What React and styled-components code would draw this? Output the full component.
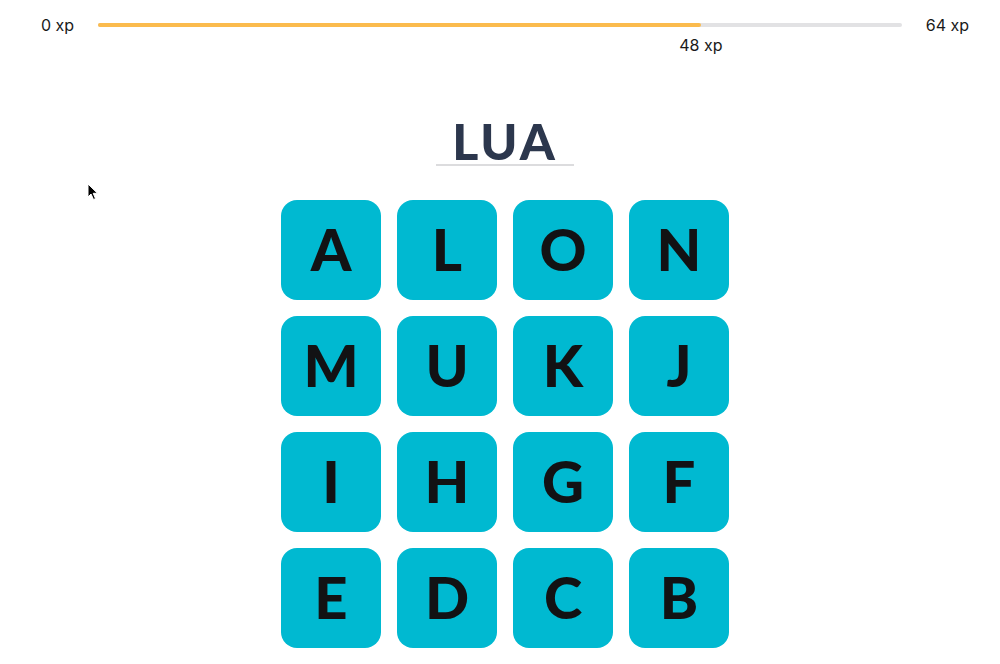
import React from 'react';
import styled, { createGlobalStyle } from 'styled-components';

const GlobalStyle = createGlobalStyle`
  body {
    margin: 0;
    background: #fff;
    font-family: Inter, "Liberation Sans", sans-serif;
  }
`;

const LETTERS = ['A', 'L', 'O', 'N', 'M', 'U', 'K', 'J', 'I', 'H', 'G', 'F', 'E', 'D', 'C', 'B'];

export default function App() {
  const xp = 48;
  const max = 64;
  const pct = (xp / max) * 100;

  return (
    <Page>
      <GlobalStyle />
      <ProgressRow>
        <XpLabel>0 xp</XpLabel>
        <Track>
          <Fill style={{ width: `${pct}%` }} />
          <Marker style={{ left: `${pct}%` }}>{xp} xp</Marker>
        </Track>
        <XpLabel>{max} xp</XpLabel>
      </ProgressRow>

      <Main>
        <Word>LUA</Word>
        <Grid>
          {LETTERS.map((l) => (
            <Tile key={l}>{l}</Tile>
          ))}
        </Grid>
      </Main>

      <Cursor width="12" height="18" viewBox="0 0 12 18">
        <path
          d="M1 1 L1 14 L4 11 L6.5 16.5 L8.5 15.6 L6.2 10.3 L10.5 10.3 Z"
          fill="#000"
          stroke="#fff"
          strokeWidth="1"
          strokeLinejoin="round"
        />
      </Cursor>
    </Page>
  );
}

const Page = styled.div`
  position: relative;
  width: 1000px;
  height: 664px;
  overflow: hidden;
`;

const ProgressRow = styled.div`
  display: flex;
  align-items: center;
  gap: 24px;
  padding: 16px 31px 0 41px;
  height: 18px;
`;

const XpLabel = styled.span`
  font-size: 16px;
  line-height: 18px;
  color: #1a1a1a;
`;

const Track = styled.div`
  position: relative;
  flex: 1;
  height: 4px;
  border-radius: 2px;
  background: #e2e2e4;
`;

const Fill = styled.div`
  height: 100%;
  border-radius: 2px;
  background: #fbbb4d;
`;

const Marker = styled.span`
  position: absolute;
  top: 13px;
  transform: translateX(-50%);
  font-size: 16px;
  line-height: 18px;
  color: #1a1a1a;
  white-space: nowrap;
`;

const Main = styled.main`
  display: flex;
  flex-direction: column;
  align-items: center;
  padding: 84px 0 0 10px;
`;

const Word = styled.h1`
  margin: 0;
  padding: 0 16px 0;
  font-family: Lato, "Liberation Sans", sans-serif;
  font-weight: 900;
  font-size: 50px;
  line-height: 46px;
  letter-spacing: 3px;
  color: #2c374d;
  border-bottom: 2px solid #dcdcde;
`;

const Grid = styled.div`
  display: grid;
  grid-template-columns: repeat(4, 100px);
  gap: 16px;
  margin-top: 34px;
`;

const Tile = styled.div`
  width: 100px;
  height: 100px;
  padding-bottom: 4px;
  box-sizing: border-box;
  border-radius: 16px;
  background: #00b9d1;
  display: flex;
  align-items: center;
  justify-content: center;
  font-family: Lato, "Liberation Sans", sans-serif;
  font-weight: 900;
  font-size: 58px;
  color: #121214;
`;

const Cursor = styled.svg`
  position: absolute;
  left: 87px;
  top: 183px;
`;
